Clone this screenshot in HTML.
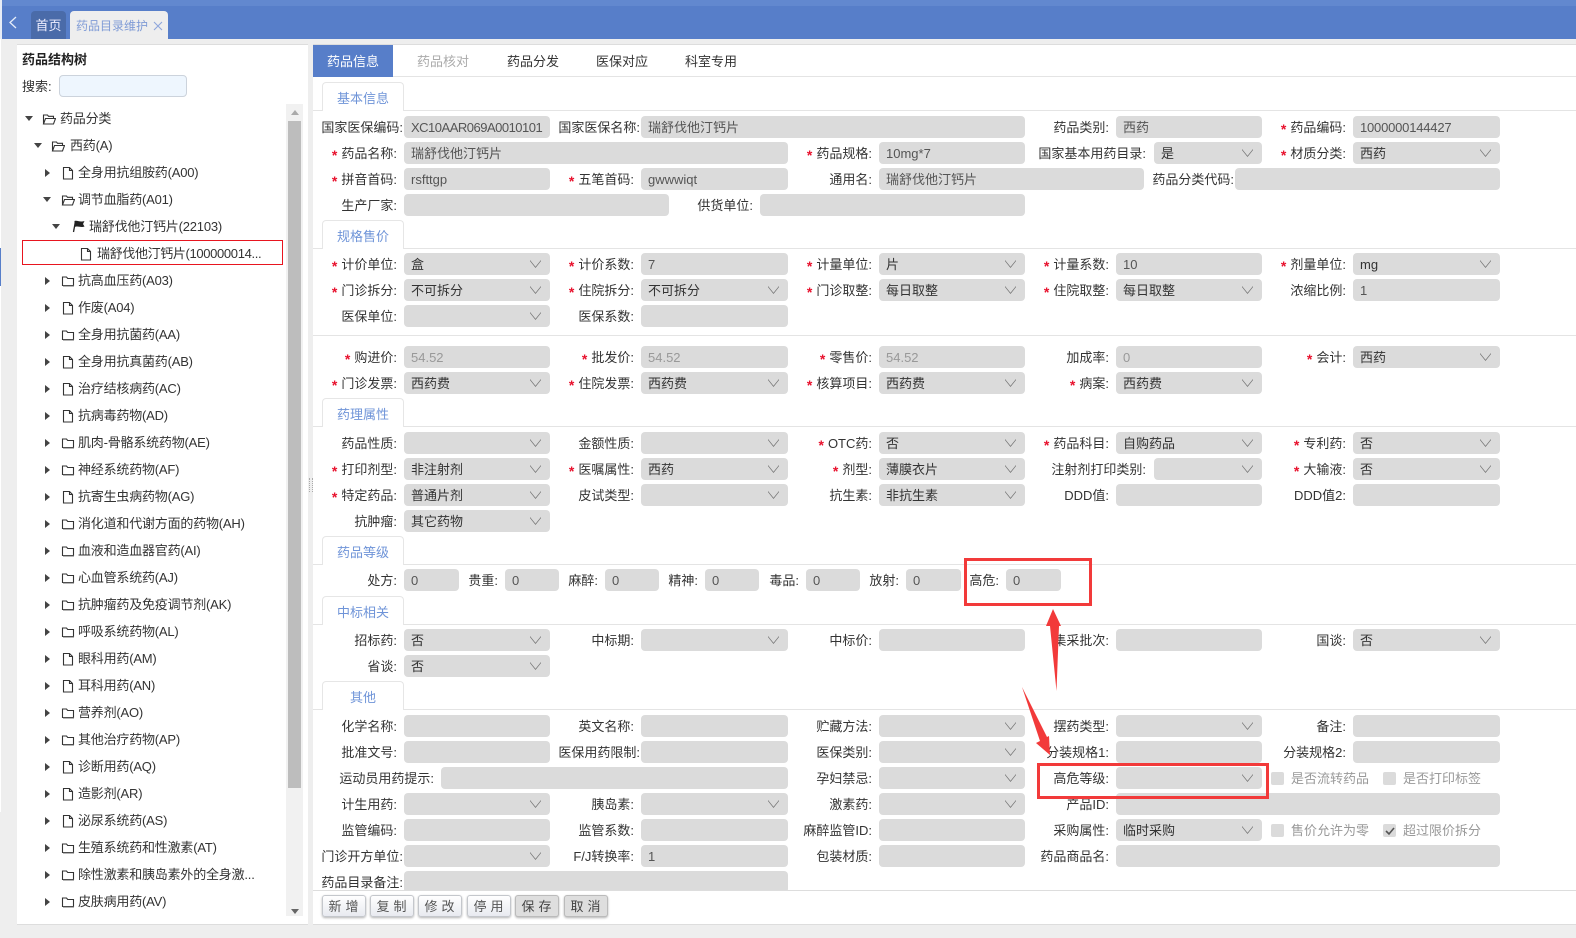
<!DOCTYPE html>
<html lang="zh"><head><meta charset="utf-8"><title>药品目录维护</title>
<style>
html,body{margin:0;padding:0}
body{width:1576px;height:938px;overflow:hidden;position:relative;background:#eee;font:13px/22px "Liberation Sans","Noto Sans CJK SC",sans-serif;color:#333}
div,p,i,span,b,svg{position:absolute;margin:0;font-style:normal}
em{position:relative;top:2px;font-style:normal;font-weight:700;font-size:14px;line-height:0;color:#e8112d;margin-right:4px}
.f{height:22px;background:#dbdbdb;border-radius:4px;padding-left:7px;box-sizing:border-box;color:#555;white-space:nowrap;overflow:hidden;line-height:24px}
.g{color:#999}
.d{color:#333}
.s::after{content:"";position:absolute;right:9px;top:7px;width:11px;height:8px;background:#777;clip-path:polygon(0 0,50% 84%,100% 0,100% 14%,50% 100%,0 14%)}
.c1{left:404px;width:146px}.c2{left:641px;width:147px}.c3{left:879px;width:146px}.c4{left:1116px;width:146px}.c5{left:1353px;width:147px}
.l{width:113px;text-align:right;white-space:nowrap;color:#333;line-height:24px}
.L1{left:284px}.L2{left:521px}.L3{left:759px}.L4{left:996px}.L5{left:1233px}
.r{left:0;width:1576px;height:22px}
.st{left:322px;width:82px;box-sizing:border-box;background:#fff;border:1px solid #e6e6e6;border-bottom:0;border-radius:4px 4px 0 0;text-align:center;line-height:31px;color:#6f94d8}
.ln{left:313px;width:1263px;height:1px;background:#e4e4e4}
.t{left:0;width:286px;height:22px;white-space:nowrap;color:#333}
.t span{top:0;letter-spacing:-.2px}
.ar{width:0;height:0;border-style:solid;border-color:transparent transparent transparent #444;border-width:4px 0 4px 5px;left:45px;top:7px}
.ad{width:0;height:0;border-style:solid;border-color:#444 transparent transparent transparent;border-width:5px 4px 0 4px;top:8px}
.ic{width:14px;height:14px;left:61px;top:4px;fill:none;stroke:#333;stroke-width:1.1}
.btn{top:895px;height:22px;width:44px;box-sizing:border-box;border:1px solid #c4c7cc;border-radius:3px;background:linear-gradient(#fff,#e8eaf0);box-shadow:0 1px 2px rgba(0,0,0,.3);text-align:center;line-height:22px;letter-spacing:4px;text-indent:3px;color:#555}
.dk{background:#dedede;border-color:#bbb;color:#444}
.tb{top:45px;height:31px;line-height:33px;color:#333}
.ck{width:13px;height:13px;background:#dbdbdb;border-radius:2px}
.ct{color:#999;white-space:nowrap;line-height:24px}
</style></head><body>
<svg width="0" height="0" style="position:absolute"><defs>
<g id="fd"><path d="M1.5 11.5V3h4l1.2 1.5h5.8v7z"/><path d="M2 12.3h11" stroke="#aaa"/></g>
<g id="fo"><path d="M1.5 12V3h4l1 1.3h5V6.5M1.5 12l2-5.5h10l-2 5.5z"/></g>
<g id="fl"><path d="M2.500 1.500h6l3 3v8.500h-9zM8.500 1.500v3h3"/></g>
</defs></svg>

<!-- header -->
<div style="left:0;top:0;width:1576px;height:39px;background:#577ec9"></div>
<div style="left:0;top:0;width:1576px;height:6px;background:#6288cf"></div>
<div style="left:0;top:0;width:2px;height:39px;background:#e8edf6"></div>
<svg style="left:8px;top:15px" width="10" height="15"><path d="M8 2L2 7.5 8 13" fill="none" stroke="#e6edf9" stroke-width="1.3"/></svg>
<div style="left:31px;top:11px;width:35px;height:28px;background:#4a6ba9;border-radius:4px 4px 0 0;color:#eef;text-align:center;line-height:30px">首页</div>
<div style="left:70px;top:11px;width:98px;height:28px;background:#eee;border-radius:4px 4px 0 0;color:#7f9bd6;line-height:30px;font-size:12px;padding-left:6px;box-sizing:border-box;white-space:nowrap">药品目录维护</div>
<svg style="left:153px;top:21px" width="10" height="10"><path d="M1 1l8 8M9 1l-8 8" stroke="#8ea6dc" stroke-width="1.1"/></svg>

<div style="left:0;top:39px;width:1px;height:773px;background:#fff"></div>
<div style="left:0;top:248px;width:1px;height:38px;background:#577ec9"></div>

<!-- left panel -->
<div style="left:17px;top:44px;width:291px;height:881px;background:#fff;border-top:1px solid #ddd;border-bottom:1px solid #ddd;box-sizing:border-box"></div>
<div style="left:22px;top:49px;font-weight:700;color:#222;white-space:nowrap">药品结构树</div>
<div style="left:22px;top:76px;white-space:nowrap">搜索:</div>
<div style="left:59px;top:75px;width:128px;height:22px;box-sizing:border-box;background:#eef6fe;border:1px solid #ccd3dc;border-radius:4px"></div>
<div style="left:286px;top:104px;width:17px;height:812px;background:#f1f1f1"></div>
<div style="left:288px;top:121px;width:13px;height:667px;background:#bdbdbd"></div>
<div style="left:291px;top:110px;width:0;height:0;border:4px solid transparent;border-top:0;border-bottom:5px solid #aaa"></div>
<div style="left:291px;top:909px;width:0;height:0;border:4px solid transparent;border-bottom:0;border-top:5px solid #666"></div>
<div style="left:309px;top:478px;width:2px;height:14px;border-left:1px dotted #aaa;border-right:1px dotted #aaa"></div>

<!-- tree -->
<div class="t" style="top:108px"><b class="ad" style="left:25px"></b><svg class="ic" style="left:42px"><use href="#fo"/></svg><span style="left:60px">药品分类</span></div>
<div class="t" style="top:135px"><b class="ad" style="left:34px"></b><svg class="ic" style="left:51px"><use href="#fo"/></svg><span style="left:70px">西药(A)</span></div>
<div class="t" style="top:162px"><b class="ar"></b><svg class="ic"><use href="#fl"/></svg><span style="left:78px">全身用抗组胺药(A00)</span></div>
<div class="t" style="top:189px"><b class="ad" style="left:43px"></b><svg class="ic"><use href="#fo"/></svg><span style="left:78px">调节血脂药(A01)</span></div>
<div class="t" style="top:216px"><b class="ad" style="left:52px"></b><svg style="left:71px;top:3px" width="15" height="14"><path d="M2.500 13L4.500 2" stroke="#222" stroke-width="1.300"/><path d="M3.500 2c3-1 5 1.500 10 0l-1.500 3 1.500 2.500c-4 1.500-6-1-10 .5z" fill="#222"/></svg><span style="left:89px">瑞舒伐他汀钙片(22103)</span></div>
<div style="left:22px;top:240px;width:261px;height:25px;box-sizing:border-box;border:1px solid #e8151f"></div>
<div class="t" style="top:243px"><svg class="ic" style="left:79px"><use href="#fl"/></svg><span style="left:97px;letter-spacing:-.35px">瑞舒伐他汀钙片(100000014...</span></div>
<div class="t" style="top:270px"><b class="ar"></b><svg class="ic"><use href="#fd"/></svg><span style="left:78px">抗高血压药(A03)</span></div>
<div class="t" style="top:297px"><b class="ar"></b><svg class="ic"><use href="#fl"/></svg><span style="left:78px">作废(A04)</span></div>
<div class="t" style="top:324px"><b class="ar"></b><svg class="ic"><use href="#fd"/></svg><span style="left:78px">全身用抗菌药(AA)</span></div>
<div class="t" style="top:351px"><b class="ar"></b><svg class="ic"><use href="#fl"/></svg><span style="left:78px">全身用抗真菌药(AB)</span></div>
<div class="t" style="top:378px"><b class="ar"></b><svg class="ic"><use href="#fl"/></svg><span style="left:78px">治疗结核病药(AC)</span></div>
<div class="t" style="top:405px"><b class="ar"></b><svg class="ic"><use href="#fl"/></svg><span style="left:78px">抗病毒药物(AD)</span></div>
<div class="t" style="top:432px"><b class="ar"></b><svg class="ic"><use href="#fd"/></svg><span style="left:78px">肌肉-骨骼系统药物(AE)</span></div>
<div class="t" style="top:459px"><b class="ar"></b><svg class="ic"><use href="#fd"/></svg><span style="left:78px">神经系统药物(AF)</span></div>
<div class="t" style="top:486px"><b class="ar"></b><svg class="ic"><use href="#fl"/></svg><span style="left:78px">抗寄生虫病药物(AG)</span></div>
<div class="t" style="top:513px"><b class="ar"></b><svg class="ic"><use href="#fd"/></svg><span style="left:78px">消化道和代谢方面的药物(AH)</span></div>
<div class="t" style="top:540px"><b class="ar"></b><svg class="ic"><use href="#fd"/></svg><span style="left:78px">血液和造血器官药(AI)</span></div>
<div class="t" style="top:567px"><b class="ar"></b><svg class="ic"><use href="#fd"/></svg><span style="left:78px">心血管系统药(AJ)</span></div>
<div class="t" style="top:594px"><b class="ar"></b><svg class="ic"><use href="#fd"/></svg><span style="left:78px">抗肿瘤药及免疫调节剂(AK)</span></div>
<div class="t" style="top:621px"><b class="ar"></b><svg class="ic"><use href="#fd"/></svg><span style="left:78px">呼吸系统药物(AL)</span></div>
<div class="t" style="top:648px"><b class="ar"></b><svg class="ic"><use href="#fl"/></svg><span style="left:78px">眼科用药(AM)</span></div>
<div class="t" style="top:675px"><b class="ar"></b><svg class="ic"><use href="#fl"/></svg><span style="left:78px">耳科用药(AN)</span></div>
<div class="t" style="top:702px"><b class="ar"></b><svg class="ic"><use href="#fd"/></svg><span style="left:78px">营养剂(AO)</span></div>
<div class="t" style="top:729px"><b class="ar"></b><svg class="ic"><use href="#fd"/></svg><span style="left:78px">其他治疗药物(AP)</span></div>
<div class="t" style="top:756px"><b class="ar"></b><svg class="ic"><use href="#fl"/></svg><span style="left:78px">诊断用药(AQ)</span></div>
<div class="t" style="top:783px"><b class="ar"></b><svg class="ic"><use href="#fl"/></svg><span style="left:78px">造影剂(AR)</span></div>
<div class="t" style="top:810px"><b class="ar"></b><svg class="ic"><use href="#fl"/></svg><span style="left:78px">泌尿系统药(AS)</span></div>
<div class="t" style="top:837px"><b class="ar"></b><svg class="ic"><use href="#fd"/></svg><span style="left:78px">生殖系统药和性激素(AT)</span></div>
<div class="t" style="top:864px"><b class="ar"></b><svg class="ic"><use href="#fd"/></svg><span style="left:78px">除性激素和胰岛素外的全身激...</span></div>
<div class="t" style="top:891px"><b class="ar"></b><svg class="ic"><use href="#fd"/></svg><span style="left:78px">皮肤病用药(AV)</span></div>

<!-- right panel -->
<div style="left:313px;top:44px;width:1263px;height:881px;background:#fff;border-top:1px solid #ddd;border-bottom:1px solid #ddd;box-sizing:border-box"></div>
<div class="ln" style="top:76px"></div>
<div class="tb" style="left:313px;width:80px;height:32px;background:#577ec9;color:#fff;text-align:center">药品信息</div>
<div class="tb" style="left:417px;color:#aaa;white-space:nowrap">药品核对</div>
<div class="tb" style="left:507px;white-space:nowrap">药品分发</div>
<div class="tb" style="left:596px;white-space:nowrap">医保对应</div>
<div class="tb" style="left:685px;white-space:nowrap">科室专用</div>

<div class="ln" style="top:110px"></div><div class="st" style="top:82px;height:29px">基本信息</div>
<div class="ln" style="top:248px"></div><div class="st" style="top:220px;height:29px">规格售价</div>
<div class="ln" style="top:335px"></div>
<div class="ln" style="top:426px"></div><div class="st" style="top:398px;height:29px">药理属性</div>
<div class="ln" style="top:564px"></div><div class="st" style="top:536px;height:29px">药品等级</div>
<div class="ln" style="top:624px"></div><div class="st" style="top:596px;height:29px">中标相关</div>
<div class="ln" style="top:709px"></div><div class="st" style="top:681px;height:29px">其他</div>

<div class="r" style="top:116px"><p class="l" style="left:290px">国家医保编码:</p><i class="f c1" style="letter-spacing:-.5px">XC10AAR069A0010101</i><p class="l" style="left:527px">国家医保名称:</p><i class="f" style="left:641px;width:384px">瑞舒伐他汀钙片</i><p class="l L4">药品类别:</p><i class="f c4">西药</i><p class="l L5"><em>*</em>药品编码:</p><i class="f c5" style="letter-spacing:-.2px">1000000144427</i></div>
<div class="r" style="top:142px"><p class="l L1"><em>*</em>药品名称:</p><i class="f" style="left:404px;width:384px">瑞舒伐他汀钙片</i><p class="l L3"><em>*</em>药品规格:</p><i class="f c3">10mg*7</i><p class="l" style="left:1033px">国家基本用药目录:</p><i class="f s d" style="left:1154px;width:108px">是</i><p class="l L5"><em>*</em>材质分类:</p><i class="f s d c5">西药</i></div>
<div class="r" style="top:168px"><p class="l L1"><em>*</em>拼音首码:</p><i class="f c1">rsfttgp</i><p class="l L2"><em>*</em>五笔首码:</p><i class="f c2">gwwwiqt</i><p class="l L3">通用名:</p><i class="f" style="left:879px;width:265px">瑞舒伐他汀钙片</i><p class="l" style="left:1121px">药品分类代码:</p><i class="f" style="left:1235px;width:265px"></i></div>
<div class="r" style="top:194px"><p class="l L1">生产厂家:</p><i class="f" style="left:404px;width:265px"></i><p class="l" style="left:640px">供货单位:</p><i class="f" style="left:760px;width:265px"></i></div>

<div class="r" style="top:253px"><p class="l L1"><em>*</em>计价单位:</p><i class="f s d c1">盒</i><p class="l L2"><em>*</em>计价系数:</p><i class="f c2">7</i><p class="l L3"><em>*</em>计量单位:</p><i class="f s d c3">片</i><p class="l L4"><em>*</em>计量系数:</p><i class="f c4">10</i><p class="l L5"><em>*</em>剂量单位:</p><i class="f s d c5">mg</i></div>
<div class="r" style="top:279px"><p class="l L1"><em>*</em>门诊拆分:</p><i class="f s d c1">不可拆分</i><p class="l L2"><em>*</em>住院拆分:</p><i class="f s d c2">不可拆分</i><p class="l L3"><em>*</em>门诊取整:</p><i class="f s d c3">每日取整</i><p class="l L4"><em>*</em>住院取整:</p><i class="f s d c4">每日取整</i><p class="l L5">浓缩比例:</p><i class="f c5">1</i></div>
<div class="r" style="top:305px"><p class="l L1">医保单位:</p><i class="f s d c1"></i><p class="l L2">医保系数:</p><i class="f c2"></i></div>

<div class="r" style="top:346px"><p class="l L1"><em>*</em>购进价:</p><i class="f g c1">54.52</i><p class="l L2"><em>*</em>批发价:</p><i class="f g c2">54.52</i><p class="l L3"><em>*</em>零售价:</p><i class="f g c3">54.52</i><p class="l L4">加成率:</p><i class="f g c4">0</i><p class="l L5"><em>*</em>会计:</p><i class="f s d c5">西药</i></div>
<div class="r" style="top:372px"><p class="l L1"><em>*</em>门诊发票:</p><i class="f s d c1">西药费</i><p class="l L2"><em>*</em>住院发票:</p><i class="f s d c2">西药费</i><p class="l L3"><em>*</em>核算项目:</p><i class="f s d c3">西药费</i><p class="l L4"><em>*</em>病案:</p><i class="f s d c4">西药费</i></div>

<div class="r" style="top:432px"><p class="l L1">药品性质:</p><i class="f s d c1"></i><p class="l L2">金额性质:</p><i class="f s d c2"></i><p class="l L3"><em>*</em>OTC药:</p><i class="f s d c3">否</i><p class="l L4"><em>*</em>药品科目:</p><i class="f s d c4">自购药品</i><p class="l L5"><em>*</em>专利药:</p><i class="f s d c5">否</i></div>
<div class="r" style="top:458px"><p class="l L1"><em>*</em>打印剂型:</p><i class="f s d c1">非注射剂</i><p class="l L2"><em>*</em>医嘱属性:</p><i class="f s d c2">西药</i><p class="l L3"><em>*</em>剂型:</p><i class="f s d c3">薄膜衣片</i><p class="l" style="left:1033px">注射剂打印类别:</p><i class="f s d" style="left:1154px;width:108px"></i><p class="l L5"><em>*</em>大输液:</p><i class="f s d c5">否</i></div>
<div class="r" style="top:484px"><p class="l L1"><em>*</em>特定药品:</p><i class="f s d c1">普通片剂</i><p class="l L2">皮试类型:</p><i class="f s d c2"></i><p class="l L3">抗生素:</p><i class="f s d c3">非抗生素</i><p class="l L4">DDD值:</p><i class="f c4"></i><p class="l L5">DDD值2:</p><i class="f c5"></i></div>
<div class="r" style="top:510px"><p class="l L1">抗肿瘤:</p><i class="f s d c1">其它药物</i></div>

<div class="r" style="top:569px"><p class="l L1">处方:</p><i class="f" style="left:404px;width:55px">0</i><p class="l" style="left:385px">贵重:</p><i class="f" style="left:505px;width:54px">0</i><p class="l" style="left:485px">麻醉:</p><i class="f" style="left:605px;width:54px">0</i><p class="l" style="left:585px">精神:</p><i class="f" style="left:705px;width:54px">0</i><p class="l" style="left:686px">毒品:</p><i class="f" style="left:806px;width:54px">0</i><p class="l" style="left:786px">放射:</p><i class="f" style="left:906px;width:55px">0</i><p class="l" style="left:886px">高危:</p><i class="f" style="left:1006px;width:55px">0</i></div>

<div class="r" style="top:629px"><p class="l L1">招标药:</p><i class="f s d c1">否</i><p class="l L2">中标期:</p><i class="f s d c2"></i><p class="l L3">中标价:</p><i class="f c3"></i><p class="l L4">集采批次:</p><i class="f c4"></i><p class="l L5">国谈:</p><i class="f s d c5">否</i></div>
<div class="r" style="top:655px"><p class="l L1">省谈:</p><i class="f s d c1">否</i></div>

<div class="r" style="top:715px"><p class="l L1">化学名称:</p><i class="f c1"></i><p class="l L2">英文名称:</p><i class="f c2"></i><p class="l L3">贮藏方法:</p><i class="f s d c3"></i><p class="l L4">摆药类型:</p><i class="f s d c4"></i><p class="l L5">备注:</p><i class="f c5"></i></div>
<div class="r" style="top:741px"><p class="l L1">批准文号:</p><i class="f c1"></i><p class="l" style="left:527px">医保用药限制:</p><i class="f c2"></i><p class="l L3">医保类别:</p><i class="f s d c3"></i><p class="l L4">分装规格1:</p><i class="f c4"></i><p class="l L5">分装规格2:</p><i class="f c5"></i></div>
<div class="r" style="top:767px"><p class="l" style="left:321px">运动员用药提示:</p><i class="f" style="left:441px;width:347px"></i><p class="l L3">孕妇禁忌:</p><i class="f s d c3"></i><p class="l L4">高危等级:</p><i class="f s d c4"></i><b class="ck" style="left:1271px;top:5px"></b><span class="ct" style="left:1291px">是否流转药品</span><b class="ck" style="left:1383px;top:5px"></b><span class="ct" style="left:1403px">是否打印标签</span></div>
<div class="r" style="top:793px"><p class="l L1">计生用药:</p><i class="f s d c1"></i><p class="l L2">胰岛素:</p><i class="f s d c2"></i><p class="l L3">激素药:</p><i class="f s d c3"></i><p class="l L4">产品ID:</p><i class="f" style="left:1116px;width:384px"></i></div>
<div class="r" style="top:819px"><p class="l L1">监管编码:</p><i class="f c1"></i><p class="l L2">监管系数:</p><i class="f c2"></i><p class="l L3">麻醉监管ID:</p><i class="f c3"></i><p class="l L4">采购属性:</p><i class="f s d c4">临时采购</i><b class="ck" style="left:1271px;top:5px"></b><span class="ct" style="left:1291px">售价允许为零</span><b class="ck" style="left:1383px;top:5px"></b><svg style="left:1385px;top:8px" width="10" height="9"><path d="M1 4l3 3 5-6" fill="none" stroke="#555" stroke-width="1.600"/></svg><span class="ct" style="left:1403px">超过限价拆分</span></div>
<div class="r" style="top:845px"><p class="l" style="left:290px">门诊开方单位:</p><i class="f s d c1"></i><p class="l L2">F/J转换率:</p><i class="f c2">1</i><p class="l L3">包装材质:</p><i class="f c3"></i><p class="l L4">药品商品名:</p><i class="f" style="left:1116px;width:384px"></i></div>
<div class="r" style="top:871px"><p class="l" style="left:290px">药品目录备注:</p><i class="f" style="left:404px;width:384px"></i></div>

<!-- footer bar -->
<div style="left:313px;top:890px;width:1263px;height:35px;background:#fff;border-top:1px solid #ddd;border-bottom:1px solid #ddd;box-sizing:border-box"></div>
<div class="btn" style="left:322px">新增</div>
<div class="btn" style="left:370px">复制</div>
<div class="btn" style="left:418px">修改</div>
<div class="btn" style="left:467px">停用</div>
<div class="btn dk" style="left:515px">保存</div>
<div class="btn dk" style="left:564px">取消</div>

<!-- annotations -->
<svg style="left:0;top:0" width="1576" height="938" fill="none">
<rect x="965.500" y="559.500" width="125" height="45" stroke="#f23a3a" stroke-width="3"/>
<rect x="1038.500" y="764.500" width="229" height="33" stroke="#f23a3a" stroke-width="3"/>
<path d="M1053 609L1061 626 1059 626 1056.500 691 1050 626 1046 626Z" fill="#f23a3a"/>
<path d="M1022 687L1047 737 1049 736 1050 755 1036 743 1040 741Z" fill="#f23a3a"/>
</svg>
</body></html>
